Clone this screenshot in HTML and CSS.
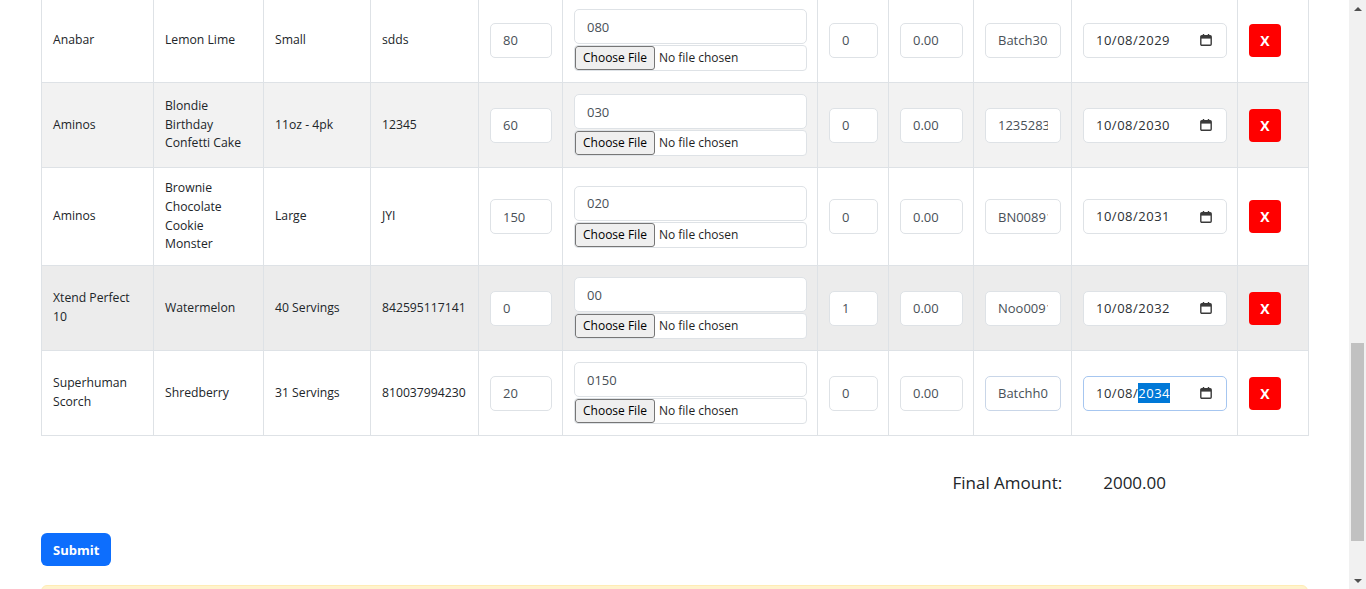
FILE: index.html
```html
<!DOCTYPE html>
<html lang="en">
<head>
<meta charset="utf-8">
<title>Stock entry</title>
<link rel="stylesheet" href="styles.css">
</head>
<body>
<div class="page">
  <main class="content">
    <table class="grid">
      <colgroup>
        <col class="c-brand"><col class="c-flavor"><col class="c-size"><col class="c-upc"><col class="c-qty">
        <col class="c-note"><col class="c-disc"><col class="c-price"><col class="c-batch"><col class="c-date"><col class="c-del">
      </colgroup>
      <tbody>
        <tr>
          <td>Anabar</td><td>Lemon Lime</td><td>Small</td><td>sdds</td>
          <td><input class="field" type="text" value="80"></td>
          <td><input class="field" type="text" value="080"><div class="file"><span class="file-btn">Choose File</span><span class="file-text">No file chosen</span></div></td>
          <td><input class="field" type="text" value="0"></td>
          <td><input class="field" type="text" value="0.00"></td>
          <td><input class="field" type="text" value="Batch3022"></td>
          <td><div class="field date"><span class="date-text">10/08/2029</span><svg class="cal" width="12" height="12" viewBox="0 0 12 12"><path d="M3.5 0v2M8.5 0v2" stroke="#3a3a3a" stroke-width="1.4"/><rect x="0.8" y="1.8" width="10.4" height="9.4" rx="1" fill="none" stroke="#3a3a3a" stroke-width="1.4"/><rect x="1" y="2" width="10" height="2.6" fill="#3a3a3a"/></svg></div></td>
          <td><button class="del" type="button">X</button></td>
        </tr>
        <tr class="striped">
          <td>Aminos</td><td>Blondie Birthday Confetti Cake</td><td>11oz - 4pk</td><td>12345</td>
          <td><input class="field" type="text" value="60"></td>
          <td><input class="field" type="text" value="030"><div class="file"><span class="file-btn">Choose File</span><span class="file-text">No file chosen</span></div></td>
          <td><input class="field" type="text" value="0"></td>
          <td><input class="field" type="text" value="0.00"></td>
          <td><input class="field" type="text" value="12352834"></td>
          <td><div class="field date"><span class="date-text">10/08/2030</span><svg class="cal" width="12" height="12" viewBox="0 0 12 12"><path d="M3.5 0v2M8.5 0v2" stroke="#3a3a3a" stroke-width="1.4"/><rect x="0.8" y="1.8" width="10.4" height="9.4" rx="1" fill="none" stroke="#3a3a3a" stroke-width="1.4"/><rect x="1" y="2" width="10" height="2.6" fill="#3a3a3a"/></svg></div></td>
          <td><button class="del" type="button">X</button></td>
        </tr>
        <tr>
          <td>Aminos</td><td>Brownie Chocolate Cookie Monster</td><td>Large</td><td>JYI</td>
          <td><input class="field" type="text" value="150"></td>
          <td><input class="field" type="text" value="020"><div class="file"><span class="file-btn">Choose File</span><span class="file-text">No file chosen</span></div></td>
          <td><input class="field" type="text" value="0"></td>
          <td><input class="field" type="text" value="0.00"></td>
          <td><input class="field" type="text" value="BN0089123"></td>
          <td><div class="field date"><span class="date-text">10/08/2031</span><svg class="cal" width="12" height="12" viewBox="0 0 12 12"><path d="M3.5 0v2M8.5 0v2" stroke="#3a3a3a" stroke-width="1.4"/><rect x="0.8" y="1.8" width="10.4" height="9.4" rx="1" fill="none" stroke="#3a3a3a" stroke-width="1.4"/><rect x="1" y="2" width="10" height="2.6" fill="#3a3a3a"/></svg></div></td>
          <td><button class="del" type="button">X</button></td>
        </tr>
        <tr class="hovered">
          <td>Xtend Perfect 10</td><td>Watermelon</td><td>40 Servings</td><td>842595117141</td>
          <td><input class="field" type="text" value="0"></td>
          <td><input class="field" type="text" value="00"><div class="file"><span class="file-btn">Choose File</span><span class="file-text">No file chosen</span></div></td>
          <td><input class="field" type="text" value="1"></td>
          <td><input class="field" type="text" value="0.00"></td>
          <td><input class="field" type="text" value="Noo00912"></td>
          <td><div class="field date"><span class="date-text">10/08/2032</span><svg class="cal" width="12" height="12" viewBox="0 0 12 12"><path d="M3.5 0v2M8.5 0v2" stroke="#3a3a3a" stroke-width="1.4"/><rect x="0.8" y="1.8" width="10.4" height="9.4" rx="1" fill="none" stroke="#3a3a3a" stroke-width="1.4"/><rect x="1" y="2" width="10" height="2.6" fill="#3a3a3a"/></svg></div></td>
          <td><button class="del" type="button">X</button></td>
        </tr>
        <tr>
          <td>Superhuman Scorch</td><td>Shredberry</td><td>31 Servings</td><td>810037994230</td>
          <td><input class="field" type="text" value="20"></td>
          <td><input class="field" type="text" value="0150"><div class="file"><span class="file-btn">Choose File</span><span class="file-text">No file chosen</span></div></td>
          <td><input class="field" type="text" value="0"></td>
          <td><input class="field" type="text" value="0.00"></td>
          <td><input class="field soft-focus" type="text" value="Batchh0912"></td>
          <td><div class="field date focused"><span class="date-text">10/08/<span class="sel">2034</span></span><svg class="cal" width="12" height="12" viewBox="0 0 12 12"><path d="M3.5 0v2M8.5 0v2" stroke="#3a3a3a" stroke-width="1.4"/><rect x="0.8" y="1.8" width="10.4" height="9.4" rx="1" fill="none" stroke="#3a3a3a" stroke-width="1.4"/><rect x="1" y="2" width="10" height="2.6" fill="#3a3a3a"/></svg></div></td>
          <td><button class="del" type="button">X</button></td>
        </tr>
      </tbody>
    </table>

    <div class="total">
      <span>Final Amount:</span>
      <span>2000.00</span>
    </div>

    <button class="submit" type="button">Submit</button>

    <div class="alert"></div>
  </main>

  <div class="scrollbar">
    <div class="sb-arrow"><svg width="8" height="4" viewBox="0 0 8 4"><path d="M0 4L4 0L8 4Z" fill="#505050"/></svg></div>
    <div class="sb-track"><div class="sb-thumb"></div></div>
    <div class="sb-arrow"><svg width="8" height="4" viewBox="0 0 8 4"><path d="M0 0L8 0L4 4Z" fill="#505050"/></svg></div>
  </div>
</div>
</body>
</html>
```

FILE: styles.css
```css
html, body {
  margin: 0;
  height: 589px;
  overflow: hidden;
}

body {
  font-family: "Open Sans", "Noto Sans", sans-serif;
  color: #212529;
  background: #fff;
}

.page {
  display: flex;
  height: 589px;
}

.content {
  width: 1349px;
  flex: none;
  box-sizing: border-box;
  padding: 0 41px;
  overflow: hidden;
}

/* table */
.grid {
  width: 1267px;
  table-layout: fixed;
  border-collapse: collapse;
  margin-top: -3px;
  font-size: 12.2px;
  line-height: 18.75px;
}

.c-brand { width: 112px; }
.c-flavor { width: 110px; }
.c-size { width: 107px; }
.c-upc { width: 108px; }
.c-qty { width: 84px; }
.c-note { width: 255px; }
.c-disc { width: 71px; }
.c-price { width: 85px; }
.c-batch { width: 98px; }
.c-date { width: 166px; }
.c-del { width: 71px; }

.grid td {
  border: 1px solid #dee2e6;
  padding: 11px 10px 11px 11px;
  vertical-align: middle;
  background: #fff;
}

.grid tr.striped td { background: #f2f2f2; }
.grid tr.hovered td { background: #ececec; }

/* form controls */
.field {
  display: block;
  width: 100%;
  height: 35px;
  box-sizing: border-box;
  margin: 0;
  padding: 6px 12px;
  font-family: "Open Sans", "Noto Sans", sans-serif;
  font-size: 13px;
  line-height: 21px;
  color: #495057;
  background: #fff;
  border: 1px solid #dee2e6;
  border-radius: 5px;
  outline: none;
}

.soft-focus { border-color: #c9d6e8; }

.date {
  display: flex;
  align-items: center;
  justify-content: space-between;
  padding: 6px 14px 6px 12px;
  color: #2b2f33;
}

.date-text {
  letter-spacing: 0.5px;
}

.date.focused { border-color: #a6c6f0; }

.sel {
  display: inline-block;
  line-height: 20px;
  background: #0078d7;
  color: #fff;
}

.cal { flex: none; }

.file {
  display: flex;
  align-items: center;
  height: 26px;
  box-sizing: border-box;
  margin-top: 1px;
  border: 1px solid #dee2e6;
  border-radius: 4px;
  background: #fff;
  font-size: 12px;
  overflow: hidden;
}

.file-btn {
  flex: none;
  height: 24px;
  box-sizing: border-box;
  padding: 0 7px;
  border: 1px solid #767676;
  border-radius: 3px;
  background: #efefef;
  color: #000;
  line-height: 22px;
  margin-right: 4px;
}

.file-text {
  color: #1f1f1f;
  line-height: 24px;
  white-space: nowrap;
}

.del {
  display: block;
  width: 32px;
  height: 33px;
  padding: 0;
  border: 0;
  border-radius: 4px;
  background: #ff0000;
  color: #fff;
  font-family: "Open Sans", "Noto Sans", sans-serif;
  font-weight: 700;
  font-size: 14px;
}

/* total */
.total {
  display: flex;
  justify-content: flex-end;
  gap: 41px;
  padding-right: 142px;
  margin-top: 34px;
  font-size: 17px;
  line-height: 26px;
  color: #212529;
}

.submit {
  display: block;
  margin-top: 37px;
  height: 33px;
  padding: 0 12px;
  border: 0;
  border-radius: 6px;
  background: #0d6efd;
  color: #fff;
  font-family: "Open Sans", "Noto Sans", sans-serif;
  font-weight: 700;
  font-size: 13px;
}

.alert {
  margin-top: 19px;
  height: 60px;
  background: #fff3cd;
  border: 1px solid #ffecb5;
  border-radius: 6px;
}

/* scrollbar */
.scrollbar {
  width: 17px;
  flex: none;
  display: flex;
  flex-direction: column;
  background: #f1f1f1;
}

.sb-arrow {
  height: 17px;
  flex: none;
  display: flex;
  align-items: center;
  justify-content: center;
}

.sb-track {
  flex: 1;
  padding: 0 2px;
}

.sb-thumb {
  margin-top: 326px;
  height: 198px;
  background: #c1c1c1;
}
```
